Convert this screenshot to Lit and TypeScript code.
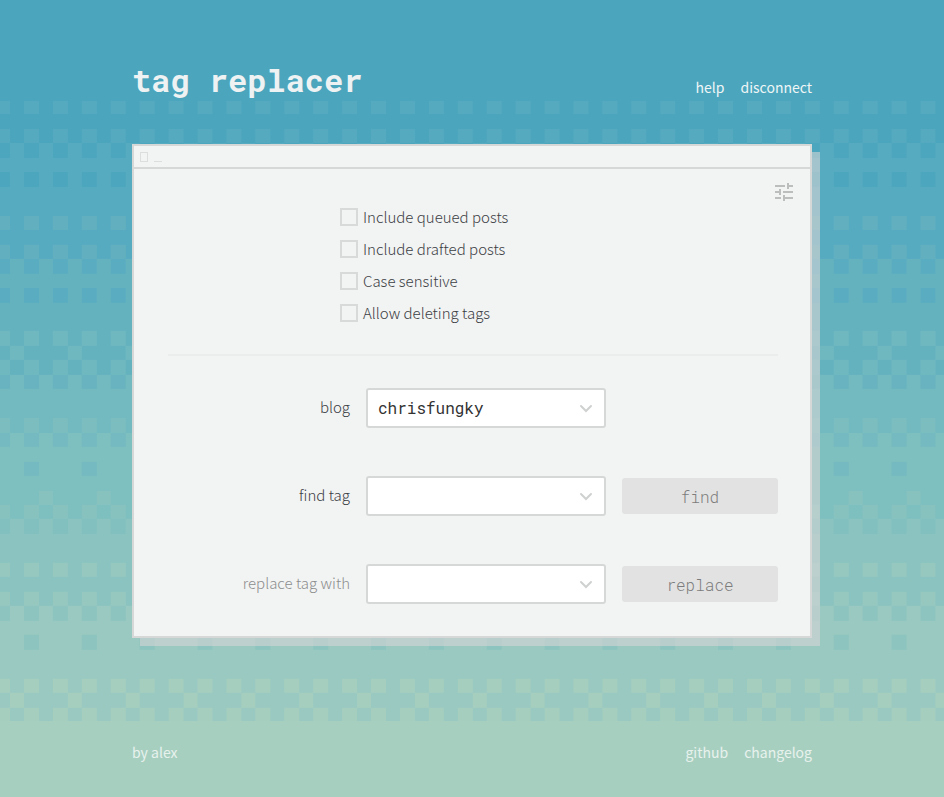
import { LitElement, html, svg, css } from "lit";
import { customElement, property } from "lit/decorators.js";

const LEVELS = ["#4aa5bd", "#57abc0", "#65b2bf", "#72b9c0", "#7ebfbf", "#8ac3bf", "#99c9c0", "#a7d0bf"];

// One entry per row of dither cells: base level, level of the marked cells, marked columns of four.
type Row = [number, number, string];
const EVEN = "x.x.";
const NONE = "....";
const ROWS: Row[] = [
  [0, 1, EVEN], [0, 0, NONE], [0, 1, EVEN], [1, 0, EVEN], [1, 1, NONE], [1, 0, EVEN], [1, 1, NONE], [1, 1, NONE],
  [1, 2, EVEN], [1, 1, NONE], [1, 2, EVEN], [2, 1, EVEN], [2, 2, NONE], [2, 1, EVEN], [2, 2, NONE], [2, 2, NONE],
  [2, 3, EVEN], [2, 3, "...x"], [2, 3, EVEN], [3, 2, EVEN], [3, 3, NONE], [3, 3, NONE],
  [3, 4, EVEN], [4, 3, EVEN], [4, 4, NONE], [4, 3, "x..."], [4, 4, NONE],
  [4, 5, ".x.."], [4, 5, EVEN], [5, 4, EVEN], [5, 5, NONE], [5, 5, NONE],
  [5, 6, EVEN], [5, 5, NONE], [5, 6, EVEN], [6, 5, EVEN], [6, 6, NONE], [6, 5, "x..."], [6, 6, NONE], [6, 6, NONE],
  [6, 7, EVEN], [6, 7, "...x"], [6, 7, EVEN],
];

@customElement("dither-backdrop")
export class DitherBackdrop extends LitElement {
  static styles = css`
    :host { display: block; position: absolute; inset: 0; overflow: hidden; }
    .art { display: block; width: 100%; height: 100%; }
  `;
  render() {
    const n = ROWS.length;
    return html`<svg class="art" aria-hidden="true">
      <defs>
        <pattern id="dither" width="4" height=${n} patternUnits="userSpaceOnUse"
          patternTransform="translate(24 100) scale(14.46)" shape-rendering="crispEdges">
          ${ROWS.map(([base, mark, cols], y) => svg`
            <rect x="0" y=${y} width="4" height="1.05" fill=${LEVELS[base]} />
            ${[...cols].map((c, x) => c === "x"
              ? svg`<rect x=${x} y=${y} width="1" height="1" fill=${LEVELS[mark]} fill-opacity="0.8" />` : null)}`)}
        </pattern>
      </defs>
      <rect width="100%" height="100%" fill="#a7cfc0" />
      <rect width="100%" height="101" fill=${LEVELS[0]} />
      <rect y="101" width="100%" height="620" fill="url(#dither)" />
    </svg>`;
  }
}

@customElement("tag-select")
export class TagSelect extends LitElement {
  @property() label = "";
  @property() value = "";
  @property({ type: Boolean }) muted = false;
  static styles = css`
    :host { display: contents; }
    .label { text-align: right; color: #3b4044; line-height: 24px; padding-bottom: 2px; }
    .muted { color: #8c8e8e; }
    .field { display: grid; align-items: center; }
    .select {
      grid-area: 1 / 1; box-sizing: border-box; width: 100%; height: 40px; margin: 0; padding: 0 36px 2px 10px;
      appearance: none; border: 2px solid #d6d7d7; border-radius: 3px; background: #fff; color: #333;
      font: 16px "Roboto Mono", "Liberation Mono", monospace;
    }
    .arrow { grid-area: 1 / 1; justify-self: end; width: 14px; height: 10px; margin-right: 13px; pointer-events: none; }
  `;
  render() {
    return html`
      <label class="label ${this.muted ? "muted" : ""}" for="control">${this.label}</label>
      <div class="field">
        <select class="select" id="control"><option>${this.value}</option></select>
        <svg class="arrow" viewBox="0 0 14 10" fill="none" stroke="#cfd0d0" stroke-width="2" aria-hidden="true">
          <path d="M2 3L7 8L12 3" stroke-linecap="round" />
        </svg>
      </div>`;
  }
}

@customElement("app-root")
export class AppRoot extends LitElement {
  static styles = css`
    :host {
      display: block; position: relative; min-height: 100vh; box-sizing: border-box;
      font: 300 15px/24px "Source Sans Pro", "Noto Sans CJK SC", "Noto Sans", sans-serif; color: #3b4044;
    }
    .page { position: relative; box-sizing: border-box; max-width: 680px; margin: 0 auto; padding-top: 60px; }
    .header { display: flex; justify-content: space-between; align-items: center; height: 84px; box-sizing: border-box; padding-bottom: 44px; }
    .title { margin: 0; font: 700 32px/40px "Roboto Mono", "Liberation Mono", monospace; color: #eef2f2; }
    .links { display: flex; gap: 16px; }
    .header .links { padding-top: 14px; }
    .link { color: #f0f6f6; text-decoration: none; font-size: 14px; font-weight: 400; }
    .footer .link { color: #e8f2ed; }
    .card { border: 2px solid #d5d8d6; background: #f2f3f3; box-shadow: 8px 8px 0 rgba(214, 214, 214, 0.6); }
    .bar { display: flex; align-items: center; gap: 6px; height: 21px; padding: 0 6px; border-bottom: 2px solid #d5d8d6; color: #dcdedd; }
    .box { width: 6px; height: 8px; border: 1px solid #dcdedd; }
    .dash { width: 8px; height: 10px; border-bottom: 1px solid #dcdedd; }
    .body { padding: 11px 14px 32px 34px; }
    .tools { display: flex; justify-content: flex-end; }
    .tune { width: 24px; height: 24px; padding: 0; border: 0; background: none; color: #bcbebe; }
    .icon { display: block; width: 24px; height: 24px; fill: currentColor; }
    .content { padding-right: 18px; }
    .options { display: grid; gap: 8px; padding: 1px 0 29px 172px; border-bottom: 2px solid #ebecec; }
    .option { display: flex; align-items: center; gap: 5px; }
    .check { appearance: none; box-sizing: border-box; width: 18px; height: 18px; margin: 0; border: 2px solid #d8dada; }
    .form { display: grid; grid-template-columns: 1fr 240px 156px; gap: 48px 16px; align-items: center; padding-top: 32px; }
    .action {
      grid-column: 3; height: 36px; padding: 0; border: 0; border-radius: 3px; background: #e2e2e2; color: #7c7c7c;
      font: 300 16px "Roboto Mono", "Liberation Mono", monospace;
    }
    .blank { grid-column: 3; }
    .footer { display: flex; justify-content: space-between; padding: 102px 0 32px; }
  `;

  render() {
    const options = ["Include queued posts", "Include drafted posts", "Case sensitive", "Allow deleting tags"];
    return html`
      <dither-backdrop></dither-backdrop>
      <div class="page">
        <header class="header">
          <h1 class="title">tag replacer</h1>
          <nav class="links"><a class="link" href="#help">help</a><a class="link" href="#disconnect">disconnect</a></nav>
        </header>
        <main class="card">
          <div class="bar" aria-hidden="true"><span class="box"></span><span class="dash"></span></div>
          <div class="body">
            <div class="tools">
              <button class="tune" aria-label="Options">
                <svg class="icon" viewBox="0 0 24 24"><path d="M3 17v2h6v-2H3zM3 5v2h10V5H3zm10 16v-2h8v-2h-8v-2h-2v6h2zM7 9v2H3v2h4v2h2V9H7zm14 4v-2H11v2h10zm-6-4h2V7h4V5h-4V3h-2v6z" /></svg>
              </button>
            </div>
            <div class="content">
              <div class="options">
                ${options.map((o) => html`<label class="option"><input class="check" type="checkbox" />${o}</label>`)}
              </div>
              <div class="form">
                <tag-select label="blog" value="chrisfungky"></tag-select>
                <span class="blank"></span>
                <tag-select label="find tag"></tag-select>
                <button class="action">find</button>
                <tag-select label="replace tag with" muted></tag-select>
                <button class="action">replace</button>
              </div>
            </div>
          </div>
        </main>
        <footer class="footer">
          <a class="link" href="#alex">by alex</a>
          <nav class="links"><a class="link" href="#github">github</a><a class="link" href="#changelog">changelog</a></nav>
        </footer>
      </div>`;
  }
}
